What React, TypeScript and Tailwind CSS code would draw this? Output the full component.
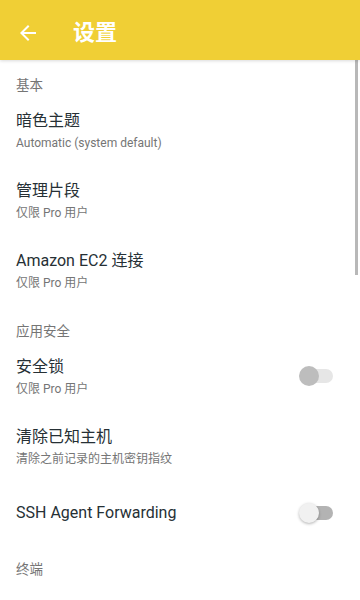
import React from "react";

const font = { fontFamily: 'Roboto, "Noto Sans CJK SC", "Noto Sans", sans-serif' };

function Category({ label }: { label: string }) {
  return (
    <div className="h-[36px] pt-[15px] pl-4">
      <div className="text-[13.5px] leading-5 text-[#757575]">{label}</div>
    </div>
  );
}

function Item({
  title,
  sub,
  toggle,
  last,
}: {
  title: string;
  sub?: string;
  toggle?: "disabled" | "off";
  last?: boolean;
}) {
  return (
    <div
      className={`flex pl-4 pr-[27px] ${
        sub ? `h-[70px] items-start ${last ? "pt-[18px]" : "pt-[14px]"}` : "h-[62px] items-center"
      }`}
    >
      <div className="flex-1 min-w-0">
        <div className="text-[16px] leading-[22px] text-[#263035]">{title}</div>
        {sub && <div className="text-[12px] leading-4 text-[#757575] mt-[3px]">{sub}</div>}
      </div>
      {toggle && (
        <div className={`relative w-[34px] h-[20px] flex items-center ${sub ? "mt-[10px]" : ""}`}>
          <div
            className={`absolute left-[3px] right-0 h-[14px] rounded-full ${
              toggle === "disabled" ? "bg-[#e6e6e6]" : "bg-[#b3b3b3]"
            }`}
          />
          <div
            className={`absolute left-0 w-[20px] h-[20px] rounded-full ${
              toggle === "disabled"
                ? "bg-[#bdbdbd]"
                : "bg-[#f1f1f1] shadow-[0_1px_3px_rgba(0,0,0,0.3)]"
            }`}
          />
        </div>
      )}
    </div>
  );
}

export default function App() {
  return (
    <div className="relative w-[360px] h-[600px] overflow-hidden bg-white" style={font}>
      <div className="relative z-10 h-[60px] bg-[#f0cf35] flex items-center pt-[6px] shadow-[0_1px_3px_rgba(0,0,0,0.15)]">
        <div className="w-[72px] pl-4 flex items-center">
          <svg width="24" height="24" viewBox="0 0 24 24" fill="#fff">
            <path d="M20 11H7.83l5.59-5.59L12 4l-8 8 8 8 1.41-1.41L7.83 13H20v-2z" />
          </svg>
        </div>
        <div className="ml-[1px] text-[22px] font-bold text-white leading-7">设置</div>
      </div>
      <div className="flex flex-col">
        <Category label="基本" />
        <Item title="暗色主题" sub="Automatic (system default)" />
        <Item title="管理片段" sub="仅限 Pro 用户" />
        <Item title="Amazon EC2 连接" sub="仅限 Pro 用户" />
        <Category label="应用安全" />
        <Item title="安全锁" sub="仅限 Pro 用户" toggle="disabled" />
        <Item title="清除已知主机" sub="清除之前记录的主机密钥指纹" />
        <Item title="SSH Agent Forwarding" toggle="off" />
        <Category label="终端" />
        <Item title="主题配色" sub="默认" last />
      </div>
      <div className="absolute right-[2px] top-[60px] w-[3px] h-[215px] bg-[#b8b8b8]" />
    </div>
  );
}
